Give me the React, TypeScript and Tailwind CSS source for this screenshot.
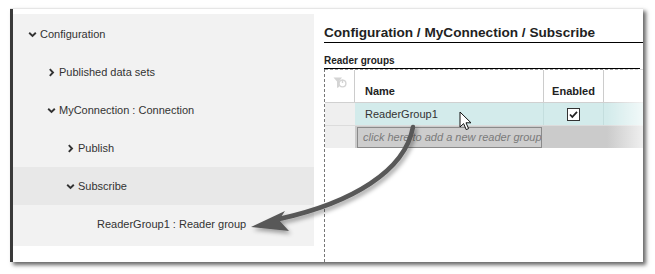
const ChevronDown = () => (
  <svg width="9" height="9" viewBox="0 0 9 9" className="shrink-0">
    <path d="M1.2 2.8 L4.5 6 L7.8 2.8" fill="none" stroke="#333" strokeWidth="1.9" />
  </svg>
);

const ChevronRight = () => (
  <svg width="9" height="9" viewBox="0 0 9 9" className="shrink-0">
    <path d="M2.8 1.2 L6 4.5 L2.8 7.8" fill="none" stroke="#333" strokeWidth="1.9" />
  </svg>
);

type Node = { label: string; indent: string; icon?: 'down' | 'right'; active?: boolean };

const nodes: Node[] = [
  { label: 'Configuration', indent: 'pl-[15px]', icon: 'down' },
  { label: 'Published data sets', indent: 'pl-[34px]', icon: 'right' },
  { label: 'MyConnection : Connection', indent: 'pl-[34px]', icon: 'down' },
  { label: 'Publish', indent: 'pl-[53px]', icon: 'right' },
  { label: 'Subscribe', indent: 'pl-[53px]', icon: 'down', active: true },
  { label: 'ReaderGroup1 : Reader group', indent: 'pl-[84px]' },
];

const FilterIcon = () => (
  <svg width="14" height="12" viewBox="0 0 14 12">
    <path d="M0.5 0.5 H9 L6 4.5 V10 L4 11 V4.5 Z" fill="#d4d4d4" />
    <circle cx="9.5" cy="6.5" r="3.4" fill="none" stroke="#d4d4d4" strokeWidth="1.4" />
    <path d="M9.5 2.5 V6" stroke="#d4d4d4" strokeWidth="1.4" />
  </svg>
);

const Cursor = () => (
  <svg width="14" height="20" viewBox="0 0 14 20" className="absolute left-[104px] top-[8px]">
    <path d="M1 1 L1 16 L4.6 12.6 L7.2 18.6 L9.6 17.6 L7 11.8 L12 11.8 Z" fill="#fff" stroke="#111" strokeWidth="1" strokeLinejoin="round" />
  </svg>
);

const Checkbox = () => (
  <svg width="13" height="13" viewBox="0 0 13 13">
    <rect x="0.5" y="0.5" width="12" height="12" fill="#fff" stroke="#333" />
    <path d="M3 6.5 L5.3 9 L10 3.8" fill="none" stroke="#222" strokeWidth="1.8" />
  </svg>
);

export default function App() {
  return (
    <div className="relative h-[274px] w-[655px] overflow-hidden bg-white pl-[10px] pt-[8px] font-['Liberation_Sans',Arial,sans-serif] text-[#333]">
      <div className="flex h-[254px] w-[633px] border-t border-[#e6e6e6] bg-white shadow-[3px_3px_4px_rgba(0,0,0,0.6)]">
        <div className="w-[3px] bg-[#3a3a3a]" />
        <div className="flex flex-1 pt-[5px]">
          {/* tree */}
          <div className="flex h-[232px] w-[301px] flex-col bg-[#f2f2f2] pt-[1px]">
            {nodes.map((n) => (
              <div
                key={n.label}
                className={`flex h-[38px] items-center gap-[3px] text-[11px] ${n.indent} ${n.active ? 'bg-[#e8e8e8]' : ''}`}
              >
                {n.icon === 'down' && <ChevronDown />}
                {n.icon === 'right' && <ChevronRight />}
                <span>{n.label}</span>
              </div>
            ))}
          </div>

          {/* details */}
          <div className="relative flex flex-1 flex-col pl-[10px]">
            <div className="border-b border-black pt-[10px] text-[13.6px] font-bold leading-[18px] text-[#222]">
              Configuration / MyConnection / Subscribe
            </div>
            <div className="mr-[3px] mt-[10px] border-b border-black text-[10px] font-bold leading-[15px] text-[#222]">
              Reader groups
            </div>
            <div className="flex flex-1 flex-col border-l border-dashed border-[#777]">
              <div className="relative">
                {/* header */}
                <div className="flex h-[33px] border-t border-dashed border-[#999] text-[11px] font-bold text-[#222]">
                  <div className="flex w-[30px] justify-center border-r border-[#ccc] pt-[7px]">
                    <FilterIcon />
                  </div>
                  <div className="flex w-[189px] items-end border-r border-[#ccc] pb-[3px] pl-[10px]">Name</div>
                  <div className="flex w-[60px] items-end justify-center border-r border-[#ccc] pb-[3px]">Enabled</div>
                  <div className="flex-1" />
                </div>
                {/* row 1 */}
                <div className="flex h-[23px] border-t border-[#d0d0d0] text-[11px]">
                  <div className="w-[30px] bg-[#efefef]" />
                  <div className="relative flex w-[189px] items-center border-r border-[#c4dede] bg-[#d3ebeb] pl-[10px]">
                    ReaderGroup1
                    <Cursor />
                  </div>
                  <div className="flex w-[60px] items-center justify-center border-r border-[#c4dede] bg-[#d3ebeb]">
                    <Checkbox />
                  </div>
                  <div className="flex-1 bg-[#d3ebeb]" />
                </div>
                {/* row 2 */}
                <div className="flex h-[23px] border-t border-[#dcdcdc] text-[11px]">
                  <div className="w-[30px] bg-[#eeeeee]" />
                  <div className="flex flex-1 items-center bg-[#cbcbcb] pl-[2px]">
                    <div className="h-[21px] w-[185px] overflow-hidden whitespace-nowrap border border-[#8a8a8a] bg-[#cdcdcd] pl-[5px] italic leading-[19px] text-[#7a7a7a]">
                      click here to add a new reader group
                    </div>
                  </div>
                </div>
                <div className="absolute right-0 top-0 h-full w-[36px] bg-linear-to-r from-white/0 to-white/70" />
              </div>
            </div>
          </div>
        </div>
      </div>

      {/* annotation arrow */}
      <svg width="655" height="274" className="pointer-events-none absolute left-0 top-0">
        <defs>
          <filter id="sh" x="-20%" y="-20%" width="140%" height="140%">
            <feDropShadow dx="2" dy="3" stdDeviation="2" floodColor="#000" floodOpacity="0.35" />
          </filter>
        </defs>
        <g filter="url(#sh)">
          <path d="M413 127 C405 171 352 203 279 219" fill="none" stroke="#585858" strokeWidth="4.5" strokeLinecap="round" />
          <path d="M251 227 L285 211 L279 220 L289 231 Z" fill="#585858" />
        </g>
      </svg>
    </div>
  );
}
